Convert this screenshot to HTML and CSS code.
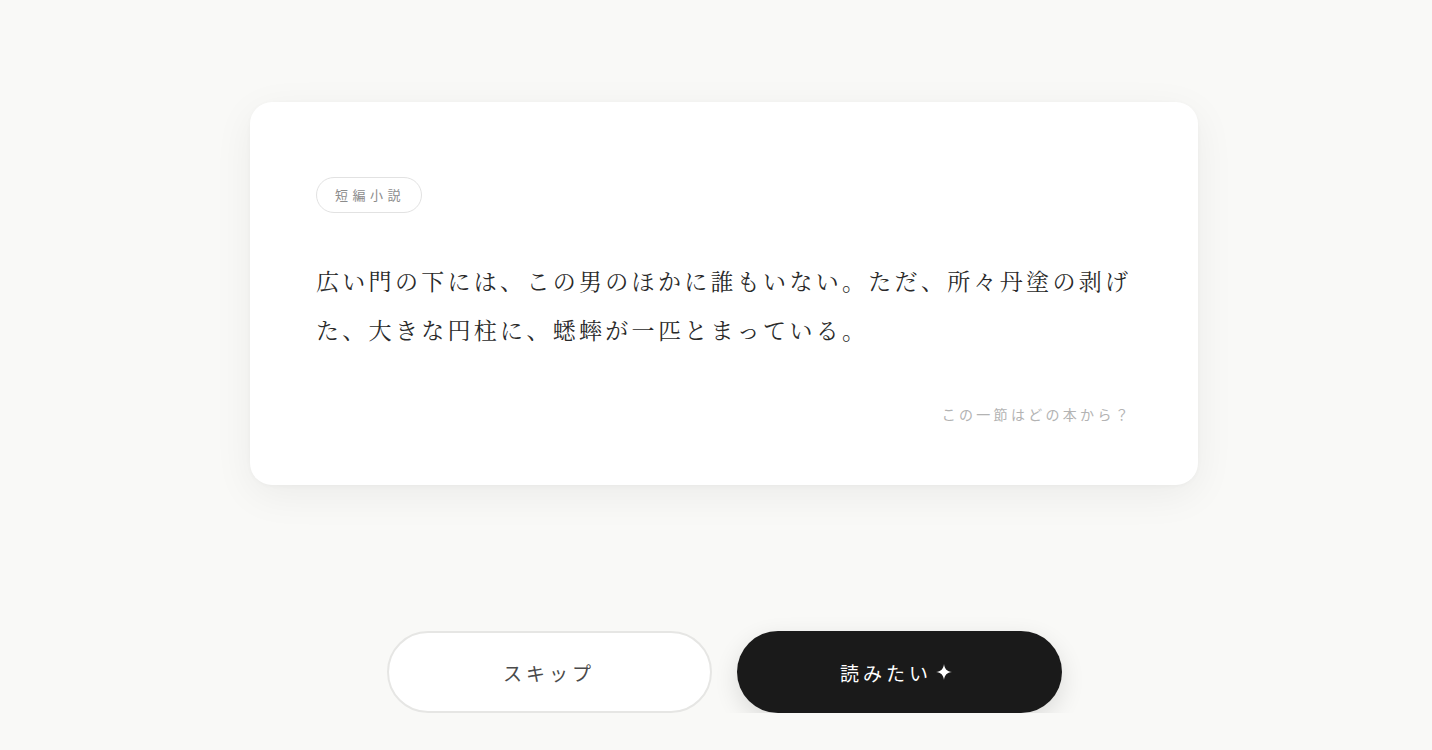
FILE: index.html
```html
<!DOCTYPE html>
<html lang="ja">
  <head>
    <meta charset="utf-8">
    <title>一節</title>
    <link rel="stylesheet" href="styles.css">
  </head>
  <body>
    <main class="page">
      <section class="card">
        <span class="tag">短編小説</span>
        <p class="quote">広い門の下には、この男のほかに誰もいない。ただ、所々丹塗の剥げた、大きな円柱に、蟋蟀が一匹とまっている。</p>
        <p class="hint">この一節はどの本から？</p>
      </section>
      <div class="actions">
        <button class="btn btn-skip">スキップ</button>
        <button class="btn btn-read">読みたい
          <svg class="star" viewBox="0 0 16 16" width="16" height="16">
            <path d="M8 0 C8.6 5 11 7.4 16 8 C11 8.6 8.6 11 8 16 C7.4 11 5 8.6 0 8 C5 7.4 7.4 5 8 0 Z" fill="#fff"/>
          </svg>
        </button>
      </div>
    </main>
  </body>
</html>
```

FILE: styles.css
```css
body {
  margin: 0;
  background: #f9f9f7;
  font-family: "Noto Sans CJK JP", "Noto Sans", sans-serif;
  color: #333;
}

.page {
  padding: 102px 0 0 16px;
}

.card {
  box-sizing: border-box;
  width: 948px;
  margin: 0 auto;
  padding: 75px 66px 61px 66px;
  background: #fff;
  border-radius: 22px;
  box-shadow: 0 10px 40px rgba(0, 0, 0, 0.06), 0 1px 4px rgba(0, 0, 0, 0.03);
}

.tag {
  display: inline-block;
  padding: 0 16px 0 18px;
  height: 34px;
  line-height: 34px;
  border: 1px solid #e2e2e2;
  border-radius: 18px;
  font-size: 13px;
  letter-spacing: 4.5px;
  color: #8c8c8c;
}

.quote {
  margin: 43px 0 0;
  font-family: "Noto Serif CJK JP", "IPAMincho", "Noto Sans CJK JP", serif;
  font-size: 23px;
  line-height: 49px;
  letter-spacing: 3.3px;
  color: #2a2a2a;
}

.hint {
  margin: 50px 0 0;
  text-align: right;
  font-size: 14px;
  letter-spacing: 3.3px;
  color: #b3b3b3;
}

.actions {
  display: flex;
  justify-content: center;
  gap: 25px;
  margin-top: 146px;
}

.btn {
  box-sizing: border-box;
  width: 325px;
  height: 82px;
  border-radius: 41px;
  font-family: "Noto Sans CJK JP", sans-serif;
  font-size: 19px;
  letter-spacing: 4px;
  display: flex;
  align-items: center;
  justify-content: center;
  cursor: pointer;
}

.btn-skip {
  background: #fff;
  border: 2px solid #e6e6e4;
  color: #4a4a4a;
}

.btn-read {
  background: #1a1a1a;
  border: none;
  color: #fff;
  padding-right: 12px;
  box-shadow: 0 8px 24px rgba(0, 0, 0, 0.12);
}

.star {
  margin-left: 4px;
}
```
